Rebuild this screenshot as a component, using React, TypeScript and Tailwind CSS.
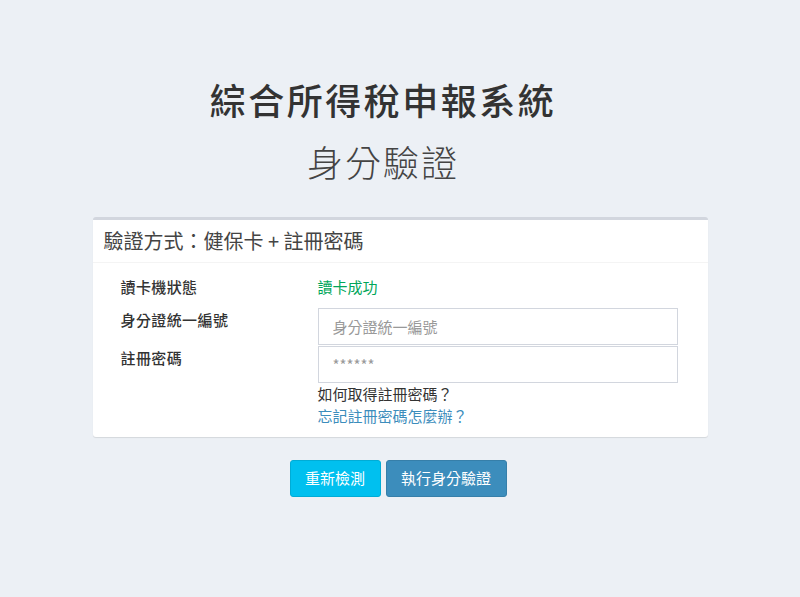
import React from "react";

export default function App() {
  const font = { fontFamily: '"Noto Sans CJK TC", "Noto Sans", sans-serif' };
  return (
    <div className="min-h-[597px] w-full bg-[#ecf0f5] text-[#333]" style={font}>
      <div className="pt-[81px] pr-[34px] text-center">
        <h1 className="text-[36px] leading-none font-medium tracking-[2.5px] text-[#333]">
          綜合所得稅申報系統
        </h1>
        <h2 className="mt-[26px] text-[36px] leading-none font-light tracking-[2px] text-[#444]">
          身分驗證
        </h2>
      </div>

      <div className="mx-auto mt-[38px] w-[615px] rounded-[3px] border-t-[3px] border-[#d2d6de] bg-white shadow-[0_1px_1px_rgba(0,0,0,0.1)]">
        <div className="border-b border-[#f4f4f4] px-[11px] py-[11px]">
          <div className="text-[20px] leading-[20px] text-[#444]">驗證方式：健保卡 + 註冊密碼</div>
        </div>
        <div className="pl-[28px] pt-[14px] pb-[10px] text-[15px]">
          <div className="flex leading-[20px]">
            <div className="w-[197px] font-medium tracking-[0.4px] text-[#333]">讀卡機狀態</div>
            <div className="text-[#00a65a]">讀卡成功</div>
          </div>
          <div className="mt-[11px] flex">
            <div className="w-[197px] pt-[2px] leading-[20px] font-medium tracking-[0.4px] text-[#333]">身分證統一編號</div>
            <input
              className="h-[37px] w-[360px] border border-[#d2d6de] bg-white px-[14px] text-[15px] text-[#555] outline-none placeholder:text-[#999]"
              placeholder="身分證統一編號"
            />
          </div>
          <div className="mt-[1px] flex">
            <div className="w-[197px] pt-[2px] leading-[20px] font-medium tracking-[0.4px] text-[#333]">註冊密碼</div>
            <input
              type="password"
              className="h-[37px] w-[360px] border border-[#d2d6de] bg-white px-[14px] text-[15px] text-[#555] outline-none placeholder:text-[#999]"
              placeholder="******"
            />
          </div>
          <div className="ml-[197px] leading-[22px]">
            <div className="text-[#333]">如何取得註冊密碼？</div>
            <div className="text-[#3c8dbc]">忘記註冊密碼怎麼辦？</div>
          </div>
        </div>
      </div>

      <div className="mt-[23px] flex justify-center gap-[5px] pr-[4px]">
        <button className="h-[37px] w-[91px] rounded-[3px] border border-[#00acd6] bg-[#00c0ef] text-[15px] text-white">
          重新檢測
        </button>
        <button className="h-[37px] w-[121px] rounded-[3px] border border-[#367fa9] bg-[#3c8dbc] text-[15px] text-white">
          執行身分驗證
        </button>
      </div>
    </div>
  );
}
